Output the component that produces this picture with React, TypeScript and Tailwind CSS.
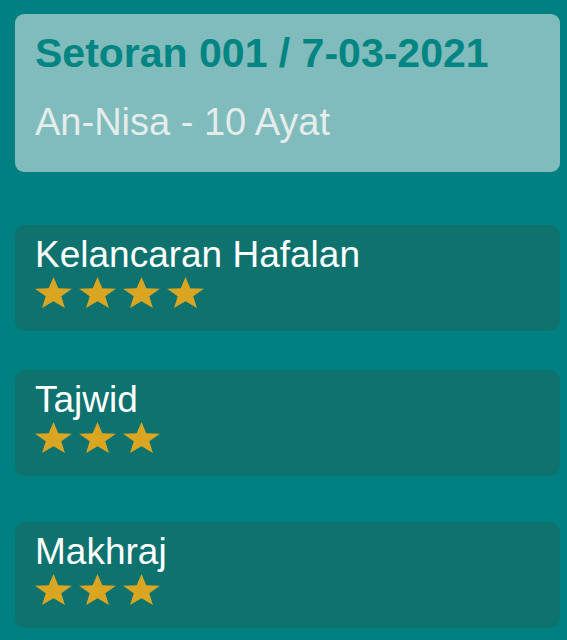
import React from 'react';

type Score = { label: string; stars: number; top: string };

const scores: Score[] = [
  { label: 'Kelancaran Hafalan', stars: 4, top: 'mt-[53px]' },
  { label: 'Tajwid', stars: 3, top: 'mt-[39px]' },
  { label: 'Makhraj', stars: 3, top: 'mt-[46px]' },
];

const Star: React.FC = () => (
  <svg width="37" height="31" viewBox="2.45 0 95.1 90.45" preserveAspectRatio="none" className="shrink-0">
    <polygon
      points="50,0 62.34,33.01 97.55,34.55 69.97,56.49 79.39,90.45 50,71 20.61,90.45 30.03,56.49 2.45,34.55 37.66,33.01"
      fill="#daa520"
    />
  </svg>
);

const App: React.FC = () => {
  return (
    <div
      className="w-[567px] h-[640px] overflow-hidden bg-[#008080] pl-[15px] pr-[7px] pt-[14px]"
      style={{ fontFamily: '"Liberation Sans", Arial, sans-serif' }}
    >
      <div className="bg-[#80bcbc] rounded-[9px] pl-[20px] pt-[16px] pb-[29px]">
        <h1 className="text-[41px] leading-[46px] font-bold text-[#008583]">Setoran 001 / 7-03-2021</h1>
        <p className="mt-[25px] text-[38px] leading-[42px] text-[#e4ecec]">An-Nisa - 10 Ayat</p>
      </div>

      {scores.map((s) => (
        <div key={s.label} className={`${s.top} h-[106px] bg-[#0e726f] rounded-[10px] pl-[20px] pt-[12px]`}>
          <div className="text-[37px] leading-[36px] text-white">{s.label}</div>
          <div className="mt-[4px] flex gap-[7px]">
            {Array.from({ length: s.stars }).map((_, i) => (
              <Star key={i} />
            ))}
          </div>
        </div>
      ))}
    </div>
  );
};

export default App;
